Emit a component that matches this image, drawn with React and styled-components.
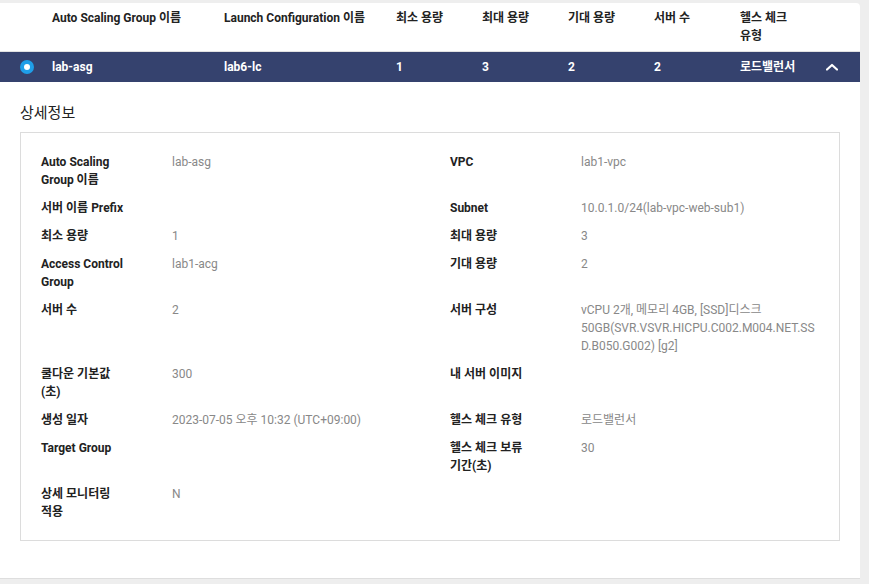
import React from "react";
import styled, { createGlobalStyle } from "styled-components";

const Global = createGlobalStyle`
  html, body { margin: 0; padding: 0; background: #eeeeee; }
  body { font-family: Roboto, "Noto Sans CJK KR", sans-serif; }
`;

const Page = styled.div`
  width: 869px;
  height: 584px;
  padding-top: 3px;
  box-sizing: border-box;
  background: #eeeeee;
  overflow: hidden;
`;

const Card = styled.div`
  width: 860px;
  background: #ffffff;
  border-top-right-radius: 4px;
  border-bottom: 1px solid #dedede;
  padding-bottom: 37px;
`;

const cols = "52px 172px 172px 86px 86px 86px 86px 86px 1fr";

const HeadRow = styled.div`
  display: grid;
  grid-template-columns: ${cols};
  border-bottom: 1px solid #e2e2e2;
  height: 49px;
  box-sizing: border-box;
`;

const HeadCell = styled.div`
  font-size: 12px;
  font-weight: 700;
  color: #222;
  line-height: 18px;
  padding: 6px 16px 0 0;
  word-break: keep-all;
`;

const DataRow = styled.div`
  display: grid;
  grid-template-columns: ${cols};
  align-items: center;
  height: 30px;
  background: #35426e;
`;

const DataCell = styled.div`
  font-size: 12px;
  font-weight: 700;
  color: #ffffff;
  line-height: 18px;
`;

const RadioCell = styled.div`
  display: flex;
  align-items: center;
  padding-left: 20px;
`;

const Radio = styled.span`
  width: 14px;
  height: 14px;
  border-radius: 50%;
  background: #1f9ee8;
  display: flex;
  align-items: center;
  justify-content: center;
  &::after {
    content: "";
    width: 6px;
    height: 6px;
    border-radius: 50%;
    background: #fff;
  }
`;

const ChevronCell = styled.div`
  display: flex;
  align-items: center;
`;

const Section = styled.div`
  padding: 21px 20px 0 20px;
`;

const Title = styled.div`
  font-size: 15px;
  line-height: 20px;
  color: #222;
  margin-bottom: 9px;
`;

const Box = styled.div`
  border: 1px solid #dcdcdc;
  padding: 15px 20px 14px;
`;

const Table = styled.div`
  display: grid;
  grid-template-columns: 131px 278px 131px minmax(0, 1fr);
`;

const Label = styled.div`
  font-size: 12px;
  font-weight: 700;
  color: #222;
  line-height: 18px;
  padding: 5px 40px 5px 0;
  word-break: keep-all;
`;

const Value = styled.div`
  font-size: 12px;
  color: #888;
  line-height: 18px;
  padding: 5px 0;
  min-width: 0;
  overflow-wrap: anywhere;
`;

const rows = [
  ["Auto Scaling Group 이름", "lab-asg", "VPC", "lab1-vpc"],
  ["서버 이름 Prefix", "", "Subnet", "10.0.1.0/24(lab-vpc-web-sub1)"],
  ["최소 용량", "1", "최대 용량", "3"],
  ["Access Control Group", "lab1-acg", "기대 용량", "2"],
  ["서버 수", "2", "서버 구성", "vCPU 2개, 메모리 4GB, [SSD]디스크 50GB(SVR.VSVR.HICPU.C002.M004.NET.SSD.B050.G002) [g2]"],
  ["쿨다운 기본값 (초)", "300", "내 서버 이미지", ""],
  ["생성 일자", "2023-07-05 오후 10:32 (UTC+09:00)", "헬스 체크 유형", "로드밸런서"],
  ["Target Group", "", "헬스 체크 보류 기간(초)", "30"],
  ["상세 모니터링 적용", "N", "", ""],
];

export default function App() {
  return (
    <Page>
      <Global />
      <Card>
        <HeadRow>
          <HeadCell />
          <HeadCell>Auto Scaling Group 이름</HeadCell>
          <HeadCell>Launch Configuration 이름</HeadCell>
          <HeadCell>최소 용량</HeadCell>
          <HeadCell>최대 용량</HeadCell>
          <HeadCell>기대 용량</HeadCell>
          <HeadCell>서버 수</HeadCell>
          <HeadCell>헬스 체크 유형</HeadCell>
          <HeadCell />
        </HeadRow>
        <DataRow>
          <RadioCell>
            <Radio />
          </RadioCell>
          <DataCell>lab-asg</DataCell>
          <DataCell>lab6-lc</DataCell>
          <DataCell>1</DataCell>
          <DataCell>3</DataCell>
          <DataCell>2</DataCell>
          <DataCell>2</DataCell>
          <DataCell>로드밸런서</DataCell>
          <ChevronCell>
            <svg width="12" height="10" viewBox="0 0 12 10">
              <path d="M1 7.5 L6 3 L11 7.5" fill="none" stroke="#fff" strokeWidth="2.2" strokeLinecap="round" strokeLinejoin="round" />
            </svg>
          </ChevronCell>
        </DataRow>
        <Section>
          <Title>상세정보</Title>
          <Box>
            <Table>
              {rows.map((r, i) => (
                <React.Fragment key={i}>
                  <Label>{r[0]}</Label>
                  <Value>{r[1]}</Value>
                  <Label>{r[2]}</Label>
                  <Value>{r[3]}</Value>
                </React.Fragment>
              ))}
            </Table>
          </Box>
        </Section>
      </Card>
    </Page>
  );
}
